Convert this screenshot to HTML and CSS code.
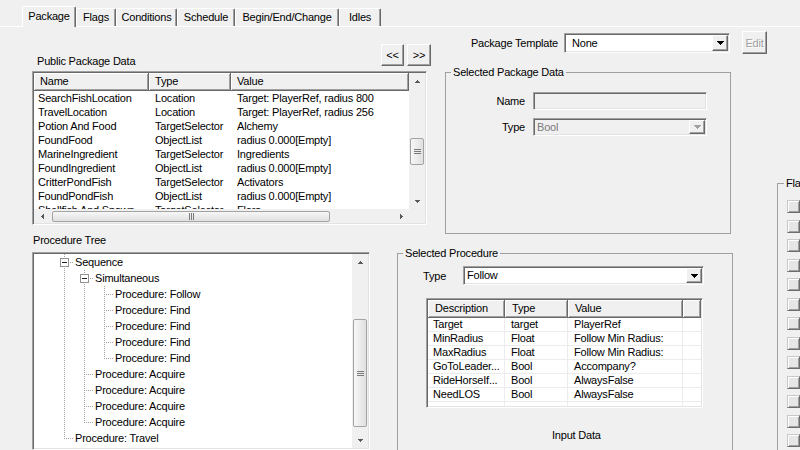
FILE: index.html
```html
<!DOCTYPE html>
<html lang="en">
<head>
    <meta charset="UTF-8">
    <title>Package</title>
    <link rel="stylesheet" href="styles.css">
</head>
<body>
<div class="Tabs">
    <div class="Tab Tab--active Tab-package">Package</div>
    <div class="Tab Tab-flags">Flags</div>
    <div class="Tab Tab-conditions">Conditions</div>
    <div class="Tab Tab-schedule">Schedule</div>
    <div class="Tab Tab-bec">Begin/End/Change</div>
    <div class="Tab Tab-idles">Idles</div>
</div>
<div class="Panel">
    <div class="Main">
        <div class="Top">
            <div class="Public">
                <div class="Public-head">
                    <span class="Public-label">Public Package Data</span>
                    <span class="Btn Raised Btn--prev">&lt;&lt;</span>
                    <span class="Btn Raised Btn--next">&gt;&gt;</span>
                </div>
                <div class="ListView Sunken ListView--public">
                    <div class="ListView-main">
                        <div class="Head Head--public"><span>Name</span><span>Type</span><span>Value</span></div>
                        <div class="Rows">
                            <div class="Row Row--public"><span>SearchFishLocation</span><span>Location</span><span>Target: PlayerRef, radius 800</span></div>
                            <div class="Row Row--public"><span>TravelLocation</span><span>Location</span><span>Target: PlayerRef, radius 256</span></div>
                            <div class="Row Row--public"><span>Potion And Food</span><span>TargetSelector</span><span>Alchemy</span></div>
                            <div class="Row Row--public"><span>FoundFood</span><span>ObjectList</span><span>radius 0.000[Empty]</span></div>
                            <div class="Row Row--public"><span>MarineIngredient</span><span>TargetSelector</span><span>Ingredients</span></div>
                            <div class="Row Row--public"><span>FoundIngredient</span><span>ObjectList</span><span>radius 0.000[Empty]</span></div>
                            <div class="Row Row--public"><span>CritterPondFish</span><span>TargetSelector</span><span>Activators</span></div>
                            <div class="Row Row--public"><span>FoundPondFish</span><span>ObjectList</span><span>radius 0.000[Empty]</span></div>
                            <div class="Row Row--public"><span>Shellfish And Spawn</span><span>TargetSelector</span><span>Flora</span></div>
                        </div>
                        <div class="HScroll">
                            <span class="SBtn"><svg class="Arrow" width="3" height="5" viewBox="0 0 3 5"><path d="M2 0h1v5H2V4H1V3H0V2h1V1h1z"/></svg></span>
                            <div class="HScroll-track">
                                <div class="Thumb Thumb--public-h"><span class="Grip-h"></span></div>
                            </div>
                            <span class="SBtn"><svg class="Arrow" width="3" height="5" viewBox="0 0 3 5"><path d="M0 0h1v1h1v1h1v1H2v1H1v1H0z"/></svg></span>
                        </div>
                    </div>
                    <div class="VScroll-col">
                        <div class="VScroll">
                            <span class="SBtn"><svg class="Arrow" width="5" height="3" viewBox="0 0 5 3"><path d="M2 0h1v1h1v1h1v1H0V2h1V1h1z"/></svg></span>
                            <div class="VScroll-track">
                                <div class="Thumb Thumb--public"><span class="Grip-v"></span></div>
                            </div>
                            <span class="SBtn"><svg class="Arrow" width="5" height="3" viewBox="0 0 5 3"><path d="M0 0h5v1H4v1H3v1H2V2H1V1H0z"/></svg></span>
                        </div>
                        <div class="Corner"></div>
                    </div>
                </div>
            </div>

            <div class="Template">
                <div class="Template-row">
                    <span class="Template-label">Package Template</span>
                    <div class="Combo Sunken Combo--template">
                        <span class="Combo-text">None</span>
                        <span class="Combo-btn Raised"><svg class="Arrow Arrow--combo" width="7" height="4" viewBox="0 0 7 4"><path d="M0 0h7v1H6v1H5v1H4v1H3V3H2V2H1V1H0z"/></svg></span>
                    </div>
                    <span class="Btn Raised Btn--edit">Edit</span>
                </div>
                <fieldset class="Group Group--package">
                    <legend>Selected Package Data</legend>
                    <div class="Fields">
                        <label>Name</label>
                        <div class="Field Sunken"></div>
                        <label>Type</label>
                        <div class="Combo Sunken Combo--disabled">
                            <span class="Combo-text">Bool</span>
                            <span class="Combo-btn Raised"><svg class="Arrow Arrow--disabled" width="7" height="4" viewBox="0 0 7 4"><path d="M0 0h7v1H6v1H5v1H4v1H3V3H2V2H1V1H0z"/></svg></span>
                        </div>
                    </div>
                </fieldset>
            </div>
        </div>

        <div class="Bottom">
            <div class="TreeBlock">
                <div class="TreeBlock-label">Procedure Tree</div>
                <div class="Tree Sunken">
                    <div class="Tree-items">
                        <div class="Node"><span class="Ind Ind--tee"><span class="Exp"></span></span><span class="Node-text">Sequence</span></div>
                        <div class="Node"><span class="Ind Ind--pipe"></span><span class="Ind Ind--tee"><span class="Exp"></span></span><span class="Node-text">Simultaneous</span></div>
                        <div class="Node"><span class="Ind Ind--pipe"></span><span class="Ind Ind--pipe"></span><span class="Ind Ind--tee"></span><span class="Node-text">Procedure: Follow</span></div>
                        <div class="Node"><span class="Ind Ind--pipe"></span><span class="Ind Ind--pipe"></span><span class="Ind Ind--tee"></span><span class="Node-text">Procedure: Find</span></div>
                        <div class="Node"><span class="Ind Ind--pipe"></span><span class="Ind Ind--pipe"></span><span class="Ind Ind--tee"></span><span class="Node-text">Procedure: Find</span></div>
                        <div class="Node"><span class="Ind Ind--pipe"></span><span class="Ind Ind--pipe"></span><span class="Ind Ind--tee"></span><span class="Node-text">Procedure: Find</span></div>
                        <div class="Node"><span class="Ind Ind--pipe"></span><span class="Ind Ind--pipe"></span><span class="Ind Ind--elbow"></span><span class="Node-text">Procedure: Find</span></div>
                        <div class="Node"><span class="Ind Ind--pipe"></span><span class="Ind Ind--tee"></span><span class="Node-text">Procedure: Acquire</span></div>
                        <div class="Node"><span class="Ind Ind--pipe"></span><span class="Ind Ind--tee"></span><span class="Node-text">Procedure: Acquire</span></div>
                        <div class="Node"><span class="Ind Ind--pipe"></span><span class="Ind Ind--tee"></span><span class="Node-text">Procedure: Acquire</span></div>
                        <div class="Node"><span class="Ind Ind--pipe"></span><span class="Ind Ind--elbow"></span><span class="Node-text">Procedure: Acquire</span></div>
                        <div class="Node"><span class="Ind Ind--elbow"></span><span class="Node-text">Procedure: Travel</span></div>
                    </div>
                    <div class="VScroll VScroll--tree">
                        <span class="SBtn"><svg class="Arrow" width="5" height="3" viewBox="0 0 5 3"><path d="M2 0h1v1h1v1h1v1H0V2h1V1h1z"/></svg></span>
                        <div class="VScroll-track">
                            <div class="Thumb Thumb--tree"><span class="Grip-v"></span></div>
                        </div>
                        <span class="SBtn"><svg class="Arrow" width="5" height="3" viewBox="0 0 5 3"><path d="M0 0h5v1H4v1H3v1H2V2H1V1H0z"/></svg></span>
                    </div>
                </div>
            </div>

            <fieldset class="Group Group--procedure">
                <legend>Selected Procedure</legend>
                <div class="ProcType">
                    <span class="ProcType-label">Type</span>
                    <div class="Combo Sunken Combo--proc">
                        <span class="Combo-text">Follow</span>
                        <span class="Combo-btn Raised"><svg class="Arrow Arrow--combo" width="7" height="4" viewBox="0 0 7 4"><path d="M0 0h7v1H6v1H5v1H4v1H3V3H2V2H1V1H0z"/></svg></span>
                    </div>
                </div>
                <div class="ListView Sunken ListView--proc">
                    <div class="ListView-main">
                        <div class="Head Head--proc"><span>Description</span><span>Type</span><span>Value</span><span></span></div>
                        <div class="Rows">
                            <div class="Row Row--proc"><span>Target</span><span>target</span><span>PlayerRef</span><span></span></div>
                            <div class="Row Row--proc"><span>MinRadius</span><span>Float</span><span>Follow Min Radius:</span><span></span></div>
                            <div class="Row Row--proc"><span>MaxRadius</span><span>Float</span><span>Follow Min Radius:</span><span></span></div>
                            <div class="Row Row--proc"><span>GoToLeader...</span><span>Bool</span><span>Accompany?</span><span></span></div>
                            <div class="Row Row--proc"><span>RideHorseIf...</span><span>Bool</span><span>AlwaysFalse</span><span></span></div>
                            <div class="Row Row--proc"><span>NeedLOS</span><span>Bool</span><span>AlwaysFalse</span><span></span></div>
                            <div class="Row Row--proc"><span></span><span></span><span></span><span></span></div>
                        </div>
                    </div>
                </div>
                <div class="InputData">Input Data</div>
            </fieldset>
        </div>
    </div>

    <fieldset class="Group Group--flags">
        <legend>Flags</legend>
        <div class="Checks">
            <span class="Check"></span><span class="Check"></span><span class="Check"></span>
            <span class="Check"></span><span class="Check"></span><span class="Check"></span>
            <span class="Check"></span><span class="Check"></span><span class="Check"></span>
            <span class="Check"></span><span class="Check"></span><span class="Check"></span>
            <span class="Check"></span>
        </div>
    </fieldset>
</div>
</body>
</html>
```

FILE: styles.css
```css
* {
    box-sizing: border-box;
}
html, body {
    margin: 0;
    width: 800px;
    height: 450px;
    overflow: hidden;
}
body {
    background: #f0f0f0;
    color: #000;
    font-family: "Liberation Sans", Arial, sans-serif;
    font-size: 11px;
    letter-spacing: -0.2px;
}

/* classic 3d borders */
.Sunken {
    border: 1px solid;
    border-color: #a0a0a0 #fff #fff #a0a0a0;
    box-shadow: inset 1px 1px #696969, inset -1px -1px #e3e3e3;
    padding: 1px;
}
.Raised {
    background: #f0f0f0;
    border: 1px solid;
    border-color: #fff #696969 #696969 #fff;
    box-shadow: inset -1px -1px #a0a0a0;
}

/* tabs */
.Tabs {
    display: flex;
    align-items: flex-end;
    height: 26px;
    padding-left: 22px;
}
.Tab {
    height: 18px;
    line-height: 17px;
    text-align: center;
    white-space: nowrap;
    border-top: 1px solid #fff;
    border-left: 1px solid #fff;
    border-right: 1px solid #696969;
    box-shadow: inset -1px 0 #a0a0a0;
    border-radius: 2px 2px 0 0;
}
.Tab--active {
    position: relative;
    z-index: 1;
    height: 21px;
    line-height: 19px;
    margin-bottom: -1px;
    background: #f0f0f0;
}
.Tab-package { width: 54px; }
.Tab-flags { width: 40px; }
.Tab-conditions { width: 61px; }
.Tab-schedule { width: 58px; }
.Tab-bec { width: 104px; }
.Tab-idles { width: 42px; }

.Panel {
    display: flex;
    height: 424px;
    border-top: 1px solid #fff;
}
.Main {
    flex: none;
    width: 777px;
    padding-left: 32px;
}
.Top, .Bottom {
    display: flex;
    align-items: flex-start;
}

/* buttons */
.Btn {
    display: flex;
    align-items: center;
    justify-content: center;
    flex: none;
}
.Btn--prev {
    width: 23px;
    height: 22px;
}
.Btn--next {
    width: 24px;
    height: 22px;
    margin-left: 3px;
}
.Btn--edit {
    width: 25px;
    height: 23px;
    margin-left: 12px;
    color: #a0a0a0;
    text-shadow: 1px 1px #fff;
}

/* public package data */
.Public {
    flex: none;
    width: 399px;
    margin-right: 14px;
}
.Public-head {
    display: flex;
    align-items: flex-end;
    height: 22px;
    margin-top: 17px;
}
.Public-label {
    flex: 1;
    padding-left: 5px;
    line-height: 13px;
    margin-bottom: -2px;
}

/* list views */
.ListView {
    display: flex;
    background: #fff;
}
.ListView--public {
    width: 395px;
    height: 154px;
    margin-top: 5px;
}
.ListView-main {
    flex: 1;
    min-width: 0;
    display: flex;
    flex-direction: column;
}
.Head {
    display: grid;
    flex: none;
    height: 18px;
}
.Head span {
    background: #f0f0f0;
    border-right: 1px solid #696969;
    border-bottom: 1px solid #696969;
    box-shadow: inset 1px 1px #fff, inset -1px -1px #a0a0a0;
    padding-left: 6px;
    line-height: 17px;
    white-space: nowrap;
    overflow: hidden;
}
.Head--public, .Row--public {
    grid-template-columns: 115px 82px 1fr;
}
.Rows {
    flex: 1;
    overflow: hidden;
}
.Row {
    display: grid;
    height: 14px;
    line-height: 14px;
    white-space: nowrap;
}
.Row span {
    padding-left: 6px;
    overflow: hidden;
}
.Row--public span:first-child {
    padding-left: 4px;
}

.ListView--proc {
    width: 277px;
    height: 110px;
    margin: 13px 0 0 28px;
}
.Head--proc, .Row--proc {
    grid-template-columns: 77px 63px 115px 1fr;
}
.Head--proc span {
    padding-left: 7px;
}
.Row--proc span {
    border-right: 1px solid #ececec;
    border-bottom: 1px solid #ececec;
    line-height: 13px;
}
.Row--proc span:first-child {
    padding-left: 5px;
}
.Row--proc span:last-child {
    border-right: 0;
}

/* scrollbars */
.SBtn {
    flex: none;
    display: flex;
    align-items: center;
    justify-content: center;
}
.Arrow {
    display: block;
    fill: #5a5a5a;
}
.Arrow--combo {
    fill: #000;
}
.Arrow--disabled {
    fill: #a0a0a0;
}
.Thumb {
    border: 1px solid #a3a3a3;
    border-radius: 2px;
    display: flex;
    align-items: center;
    justify-content: center;
}
.Grip-v {
    width: 7px;
    height: 5px;
    background: repeating-linear-gradient(#7a7a7a 0 1px, transparent 1px 2px);
}
.Grip-h {
    width: 5px;
    height: 7px;
    background: repeating-linear-gradient(to right, #7a7a7a 0 1px, transparent 1px 2px);
}
.HScroll {
    flex: none;
    height: 14px;
    display: flex;
    background: #f0f0f0;
}
.HScroll .SBtn {
    width: 16px;
}
.HScroll-track {
    flex: 1;
    display: flex;
    align-items: center;
}
.Thumb--public-h {
    width: 278px;
    height: 11px;
    margin-left: 2px;
    background: linear-gradient(#f7f7f7, #e0e0e0);
}
.VScroll-col {
    flex: none;
    width: 16px;
    display: flex;
    flex-direction: column;
}
.VScroll {
    flex: 1;
    display: flex;
    flex-direction: column;
    background: #f0f0f0;
}
.VScroll .SBtn {
    height: 16px;
}
.VScroll-track {
    flex: 1;
}
.VScroll .Thumb {
    width: 14px;
    margin-left: 1px;
    background: linear-gradient(to right, #f7f7f7, #e0e0e0);
}
.Thumb--public {
    height: 27px;
    margin-top: 49px;
}
.Corner {
    flex: none;
    height: 14px;
    background: #f0f0f0;
}
.VScroll--tree {
    flex: none;
    width: 16px;
}
.Thumb--tree {
    height: 108px;
    margin-top: 49px;
}

/* package template */
.Template {
    flex: none;
    width: 322px;
}
.Template-row {
    display: flex;
    align-items: center;
    height: 23px;
    margin-top: 4px;
}
.Template-label {
    flex: 1;
    text-align: right;
    margin-right: 6px;
}
.Combo {
    display: flex;
    background: #fff;
    flex: none;
}
.Combo-text {
    flex: 1;
    padding-left: 2px;
    white-space: nowrap;
    overflow: hidden;
}
.Combo-btn {
    flex: none;
    width: 16px;
    display: flex;
    align-items: center;
    justify-content: center;
}
.Combo--template {
    width: 166px;
    height: 20px;
}
.Combo--template .Combo-text {
    padding-left: 6px;
    line-height: 16px;
}

/* group boxes */
.Group {
    margin: 0;
    padding: 0;
    min-width: 0;
    border: 1px solid #a0a0a0;
}
.Group legend {
    padding: 0 2px;
    margin-left: 5px;
    line-height: 13px;
}
.Group--package {
    width: 286px;
    height: 168px;
    margin-top: 12px;
}
.Fields {
    display: grid;
    grid-template-columns: 79px 174px;
    gap: 8px;
    align-items: center;
    margin-top: 13px;
}
.Fields label {
    text-align: right;
}
.Field {
    height: 18px;
    background: #f0f0f0;
}
.Combo--disabled {
    height: 18px;
    background: #f0f0f0;
    color: #7a7a7a;
}
.Combo--disabled .Combo-text {
    line-height: 14px;
}

/* procedure tree */
.TreeBlock {
    flex: none;
    width: 338px;
    margin-right: 27px;
}
.TreeBlock-label {
    margin-top: 1px;
    padding-left: 1px;
    line-height: 11px;
}
.Tree {
    display: flex;
    height: 198px;
    margin-top: 6px;
    background: #fff;
}
.Tree-items {
    flex: 1;
    min-width: 0;
}
.Node {
    display: flex;
    height: 16px;
    line-height: 16px;
    padding-left: 20px;
    white-space: nowrap;
}
.Node-text {
    padding-left: 1px;
}
.Ind {
    flex: none;
    width: 20px;
}
.Ind--pipe {
    background: repeating-linear-gradient(#a0a0a0 0 1px, transparent 1px 2px) 10px 0 / 1px 16px no-repeat;
}
.Ind--tee {
    background:
        repeating-linear-gradient(#a0a0a0 0 1px, transparent 1px 2px) 10px 0 / 1px 16px no-repeat,
        repeating-linear-gradient(to right, #a0a0a0 0 1px, transparent 1px 2px) 12px 8px / 8px 1px no-repeat;
}
.Ind--elbow {
    background:
        repeating-linear-gradient(#a0a0a0 0 1px, transparent 1px 2px) 10px 0 / 1px 9px no-repeat,
        repeating-linear-gradient(to right, #a0a0a0 0 1px, transparent 1px 2px) 12px 8px / 8px 1px no-repeat;
}
.Exp {
    display: block;
    width: 9px;
    height: 9px;
    margin: 4px 0 0 6px;
    border: 1px solid #919191;
    background: linear-gradient(#222, #222) center / 5px 1px no-repeat #fff;
}

/* selected procedure */
.Group--procedure {
    flex: none;
    width: 336px;
    height: 220px;
    margin-top: 13px;
}
.ProcType {
    display: flex;
    align-items: center;
    height: 19px;
    margin-top: 6px;
    padding-left: 25px;
}
.ProcType-label {
    width: 40px;
}
.Combo--proc {
    width: 241px;
    height: 19px;
}
.Combo--proc .Combo-text {
    line-height: 15px;
}
.InputData {
    margin: 21px 0 0 154px;
    line-height: 13px;
}

/* flags */
.Group--flags {
    flex: none;
    width: 200px;
    height: 300px;
    margin-top: 150px;
}
.Group--flags legend {
    margin-left: 6px;
}
.Checks {
    display: flex;
    flex-direction: column;
    gap: 6.5px;
    margin-top: 10px;
    padding-left: 9px;
}
.Check {
    display: block;
    width: 13px;
    height: 13px;
    background: #e6e6e6;
    border: 1px solid;
    border-color: #c8c8c8 #6d6d6d #6d6d6d #c8c8c8;
    box-shadow: inset 1px 1px #fff, inset -1px -1px #a0a0a0;
}
```
